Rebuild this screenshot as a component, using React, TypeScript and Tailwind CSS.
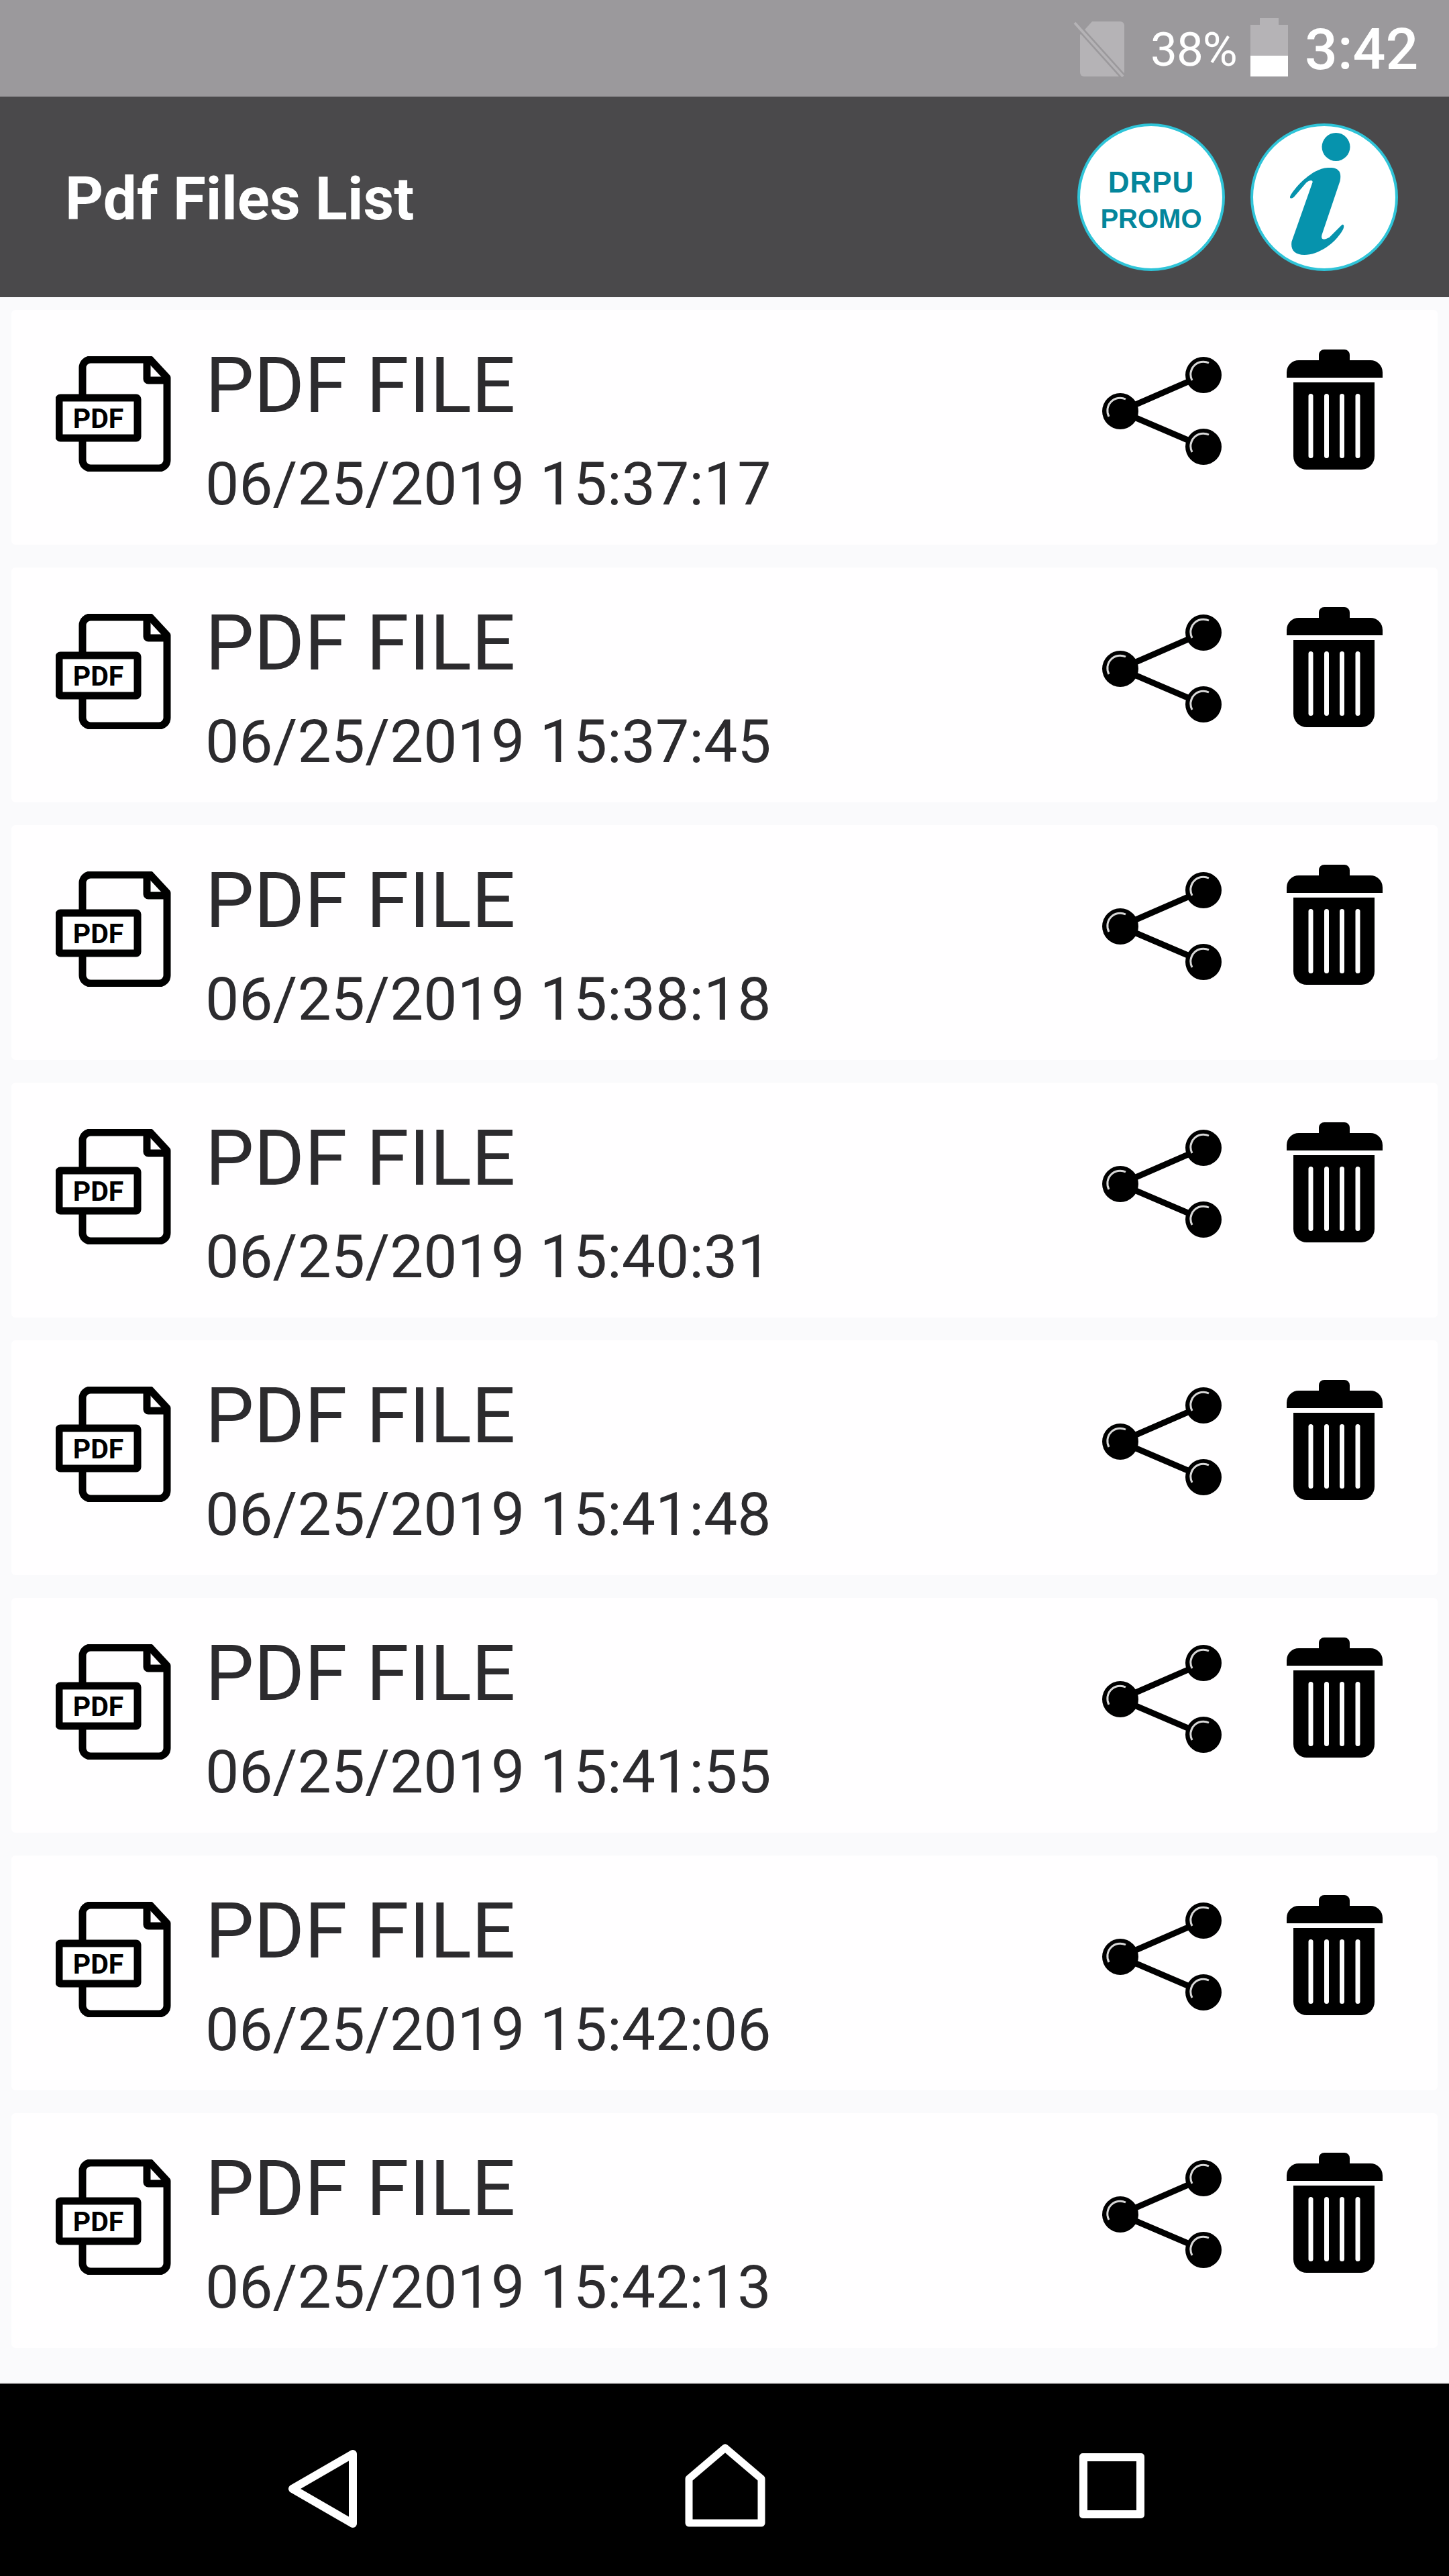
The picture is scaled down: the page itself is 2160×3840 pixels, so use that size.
const rows = [
  "06/25/2019 15:37:17",
  "06/25/2019 15:37:45",
  "06/25/2019 15:38:18",
  "06/25/2019 15:40:31",
  "06/25/2019 15:41:48",
  "06/25/2019 15:41:55",
  "06/25/2019 15:42:06",
  "06/25/2019 15:42:13",
];

function StatusBar() {
  return (
    <div className="h-[144px] bg-[#9b999c] flex items-start text-white font-['Roboto',sans-serif]">
      {/* sim icon */}
      <svg className="ml-[1600px] mt-[30px]" width="80" height="88" viewBox="0 0 80 88">
        <path d="M28 2H70a6 6 0 0 1 6 6V78a6 6 0 0 1-6 6H16a6 6 0 0 1-6-6V22Z" fill="#b5b3b6" />
        <path d="M2 4 74 84" stroke="#9b999c" strokeWidth="9" />
        <path d="M2 4 74 84" stroke="#b5b3b6" strokeWidth="4" />
      </svg>
      <span className="ml-[35px] mt-[32px] w-[131px] text-[71px] leading-[84px] tracking-[-1px] whitespace-nowrap">38%</span>
      {/* battery */}
      <div className="ml-[18px] mt-[27px] w-[56px] flex flex-col items-center">
        <div className="w-[28px] h-[10px] bg-[#b5b3b6]" />
        <div className="w-[56px] h-[46px] bg-[#b5b3b6]" />
        <div className="w-[56px] h-[31px] bg-white" />
      </div>
      <span className="ml-[25px] mt-[23px] text-[86px] leading-[102px] font-medium">3:42</span>
    </div>
  );
}

function Header() {
  return (
    <div className="h-[299px] bg-[#4a494b] flex items-center font-['Roboto',sans-serif]">
      <h1 className="ml-[97px] mt-[6px] w-[1509px] text-[89px] font-bold text-white">Pdf Files List</h1>
      <div className="w-[220px] h-[220px] rounded-full bg-white border-[4px] border-[#2fc4d8] flex flex-col items-center justify-center font-['Liberation_Sans',sans-serif] font-bold text-[#04869c]">
        <span className="mt-[10px] text-[44px] leading-[54px] tracking-[1px]">DRPU</span>
        <span className="text-[40px] leading-[54px]">PROMO</span>
      </div>
      <div className="ml-[38px] w-[220px] h-[220px] rounded-full bg-white border-[4px] border-[#2fc4d8] overflow-hidden">
        <svg width="212" height="212" viewBox="1868.5 188 212 212">
          <ellipse cx="1992" cy="219" rx="21" ry="21" fill="#0693ad" />
          <path
            d="M1924 292C1929 282 1955 251 1980 250C1995 249 2001 255 1998 270L1971 350C1969 358 1974 358 1982 354L2000 336C2004 332 2005 338 2002 343C1990 364 1965 380 1945 380C1930 380 1924 372 1926 360L1957 272C1958 268 1953 268 1948 272L1930 293C1926 297 1922 296 1924 292Z"
            fill="#0693ad"
          />
        </svg>
      </div>
    </div>
  );
}

function PdfIcon() {
  return (
    <svg className="ml-[66px] mt-[69px] shrink-0" width="172" height="172" viewBox="83 531 172 172">
      <path
        d="M123 588V548a12 12 0 0 1 12-12H224L249 563V686a12 12 0 0 1-12 12H135a12 12 0 0 1-12-12V658"
        fill="none"
        stroke="#000"
        strokeWidth="11"
        strokeLinejoin="round"
      />
      <path d="M219 536V565a2 2 0 0 0 2 2H249" fill="none" stroke="#000" strokeWidth="11" strokeLinejoin="round" />
      <rect x="88" y="593" width="117" height="60" rx="2" fill="#fff" stroke="#000" strokeWidth="11" />
      <text x="146.5" y="638" textAnchor="middle" fontFamily="Roboto, sans-serif" fontWeight="700" fontSize="41" fill="#000">
        PDF
      </text>
    </svg>
  );
}

function ShareIcon() {
  return (
    <svg className="ml-auto mt-[65px] shrink-0" width="190" height="170" viewBox="1638 527 190 170">
      <path d="M1794 559 1670 613 1794 666" fill="none" stroke="#000" strokeWidth="9" />
      {[
        [1670, 613],
        [1794, 559],
        [1794, 666],
      ].map(([cx, cy]) => (
        <g key={cy}>
          <circle cx={cx} cy={cy} r="27" fill="#000" />
          <path
            d={`M${cx - 17} ${cy + 8}A19 19 0 0 1 ${cx + 8} ${cy - 18}`}
            fill="none"
            stroke="#d8d8d8"
            strokeWidth="3"
          />
        </g>
      ))}
    </svg>
  );
}

function TrashIcon() {
  return (
    <svg className="ml-[87px] mr-[78px] mt-[59px] shrink-0" width="150" height="180" viewBox="1915 521 150 180">
      <path d="M1918 563V555a18 18 0 0 1 18-18H1966V529a8 8 0 0 1 8-8H2004a8 8 0 0 1 8 8V537H2043a18 18 0 0 1 18 18V563Z" fill="#000" />
      <path d="M1928 570H2049V680a20 20 0 0 1-20 20H1948a20 20 0 0 1-20-20Z" fill="#000" />
      {[1954, 1977.5, 2000.5, 2024].map((x) => (
        <rect key={x} x={x - 3.5} y="587" width="7" height="96" rx="3.5" fill="#fff" />
      ))}
    </svg>
  );
}

function Row({ date }: { date: string }) {
  return (
    <div className="h-[350px] bg-[#fffeff] rounded-[6px] flex items-start">
      <PdfIcon />
      <div className="ml-[51px] font-['Roboto',sans-serif] text-[#2c2b2e]">
        <div className="mt-[45px] text-[115px] leading-[135px] whitespace-nowrap">PDF FILE</div>
        <div className="mt-[27px] text-[89.5px] leading-[105px] whitespace-nowrap">{date}</div>
      </div>
      <ShareIcon />
      <TrashIcon />
    </div>
  );
}

function NavBar() {
  return (
    <div className="h-[288px] bg-black border-t-2 border-[#8c8a8c] flex items-start">
      <svg className="ml-[428px] mt-[96px]" width="108" height="120" viewBox="0 0 108 120">
        <path d="M98 8V112L8 60Z" fill="none" stroke="#fff" strokeWidth="12" strokeLinejoin="round" />
      </svg>
      <svg className="ml-[485px] mt-[89px]" width="120" height="124" viewBox="0 0 120 124">
        <path d="M6 52 60 6 114 52V118H6Z" fill="none" stroke="#fff" strokeWidth="11" strokeLinejoin="round" />
      </svg>
      <div className="ml-[468px] mt-[103px] w-[97px] h-[97px] border-[12px] border-white rounded-[5px]" />
    </div>
  );
}

export default function App() {
  return (
    <div className="w-[2160px] h-[3840px] bg-[#fafafc] flex flex-col overflow-hidden">
      <StatusBar />
      <Header />
      <div className="flex-1 px-[17px] pt-[19px] flex flex-col gap-[34px]">
        {rows.map((d) => (
          <Row key={d} date={d} />
        ))}
      </div>
      <NavBar />
    </div>
  );
}
